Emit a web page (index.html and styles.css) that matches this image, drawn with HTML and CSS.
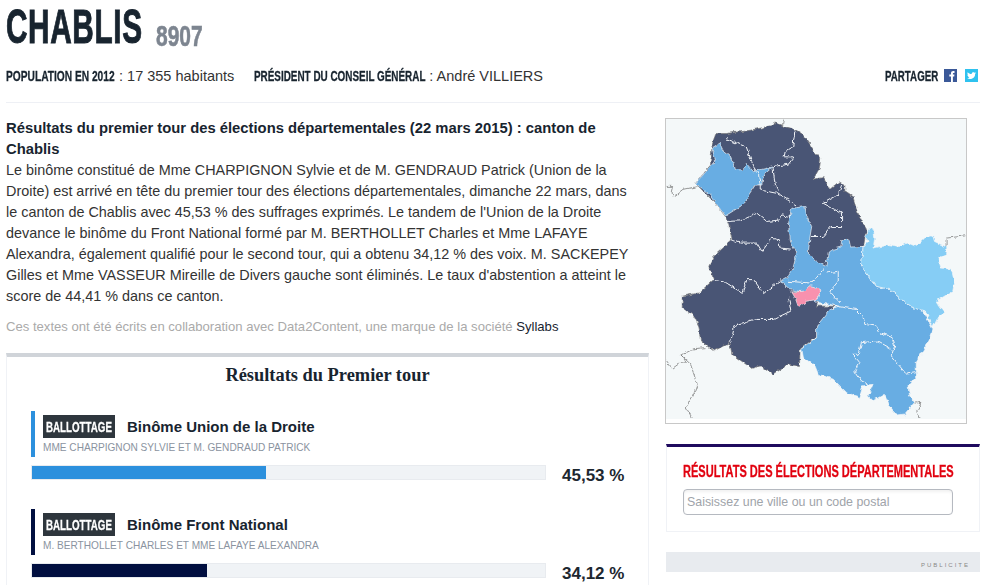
FILE: index.html
```html
<!DOCTYPE html>
<html lang="fr">
<head>
<meta charset="UTF-8">
<meta name="viewport" content="width=device-width, initial-scale=1.0">
<title>Chablis 8907</title>
<link rel="stylesheet" href="styles.css">
</head>
<body>
<div class="page">
  <h1 class="title"><span class="title-name">CHABLIS</span><span class="title-code">8907</span></h1>

  <div class="info">
    <p class="info-item"><strong class="label label-pop">POPULATION EN 2012</strong> : 17 355 habitants</p>
    <p class="info-item"><strong class="label label-pres">PRÉSIDENT DU CONSEIL GÉNÉRAL</strong> : André VILLIERS</p>
    <div class="share">
      <strong class="label label-share">PARTAGER</strong>
      <svg class="share-icon" viewBox="0 0 13 13"><rect width="13" height="13" fill="#3b5998"/><path d="M7 13V7.6H5.3V5.6H7V4.2C7 2.7 7.9 2 9.2 2H10.5V3.9H9.6C9 3.9 8.9 4.2 8.9 4.6V5.6H10.4L10.2 7.6H8.9V13Z" fill="#fff"/></svg>
      <svg class="share-icon" viewBox="0 0 13 13"><rect width="13" height="13" fill="#2fc2ef"/><path d="M11 4C10.7 4.2 10.3 4.3 9.9 4.3 10.3 4.1 10.6 3.7 10.8 3.2 10.4 3.4 10 3.6 9.5 3.7 8.6 2.7 6.7 3.3 6.7 4.7V5.1C5 5 3.600 4.300 2.700 3.200 2.200 4 2.400 5.100 3.200 5.700 2.900 5.700 2.600 5.600 2.300 5.400 2.300 6.300 2.900 7 3.800 7.200 3.500 7.300 3.200 7.300 2.900 7.200 3.100 7.900 3.800 8.400 4.600 8.500 3.800 9.100 2.900 9.400 2 9.300 5.600 11.300 10.200 9.200 10.100 4.900 10.500 4.700 10.800 4.400 11 4Z" fill="#fff"/></svg>
    </div>
  </div>

  <div class="main">
    <div class="content">
      <div class="article">
        <strong>Résultats du premier tour des élections départementales (22 mars 2015) : canton de Chablis</strong><br>
        Le binôme constitué de Mme CHARPIGNON Sylvie et de M. GENDRAUD Patrick (Union de la Droite) est arrivé en tête du premier tour des élections départementales, dimanche 22 mars, dans le canton de Chablis avec 45,53 % des suffrages exprimés. Le tandem de l'Union de la Droite devance le binôme du Front National formé par M. BERTHOLLET Charles et Mme LAFAYE Alexandra, également qualifié pour le second tour, qui a obtenu 34,12 % des voix. M. SACKEPEY Gilles et Mme VASSEUR Mireille de Divers gauche sont éliminés. Le taux d'abstention a atteint le score de 44,41 % dans ce canton.
      </div>
      <p class="credit">Ces textes ont été écrits en collaboration avec Data2Content, une marque de la société <span class="credit-link">Syllabs</span></p>

      <div class="results">
        <h2 class="results-title">Résultats du Premier tour</h2>

        <div class="candidate">
          <div class="candidate-head head-blue">
            <div class="candidate-line"><span class="badge"><span class="badge-text">BALLOTTAGE</span></span><span class="candidate-name">Binôme Union de la Droite</span></div>
            <div class="candidate-sub">MME CHARPIGNON SYLVIE ET M. GENDRAUD PATRICK</div>
          </div>
          <div class="score">
            <div class="bar"><div class="bar-fill fill-blue" style="width: 45.53%"></div></div>
            <span class="percent">45,53 %</span>
          </div>
        </div>

        <div class="candidate">
          <div class="candidate-head head-navy">
            <div class="candidate-line"><span class="badge"><span class="badge-text">BALLOTTAGE</span></span><span class="candidate-name">Binôme Front National</span></div>
            <div class="candidate-sub">M. BERTHOLLET CHARLES ET MME LAFAYE ALEXANDRA</div>
          </div>
          <div class="score">
            <div class="bar"><div class="bar-fill fill-navy" style="width: 34.12%"></div></div>
            <span class="percent">34,12 %</span>
          </div>
        </div>
      </div>
    </div>

    <aside class="side">
      <div class="map">
        <svg class="map-svg" viewBox="16 26 904 904">
          <defs>
            <filter id="rough" x="0" y="0" width="100%" height="100%">
              <feTurbulence type="fractalNoise" baseFrequency="0.07" numOctaves="2" seed="4"/>
              <feDisplacementMap in="SourceGraphic" scale="14" xChannelSelector="R" yChannelSelector="G"/>
            </filter>
          </defs>
          <rect x="16" y="26" width="904" height="904" fill="#f4f8f9"/>
          <g filter="url(#rough)">
            <!-- contours hors departement -->
            <g fill="none" stroke="#666" stroke-width="2">
              <path d="M370 28L367 48"/>
              <path d="M18 229H36L31 250L42 260L70 238L108 230"/>
              <path d="M860 412V385L918 378"/>
              <path d="M18 755L35 778L60 760L78 762L62 738L100 718L135 715"/>
              <path d="M62 738L90 765L110 825L98 860L76 895L95 927"/>
              <path d="M765 882L784 880L772 905L778 927"/>
            </g>
            <!-- cantons -->
            <path class="dark" d="M345 35L368 48L405 58L425 70L445 95L462 122L482 145L478 175L460 207L490 203L510 238L537 215L555 225L555 245L580 262L590 300L612 345L620 358L612 405L560 440L500 470L470 590L525 590L470 650L470 680L420 720L418 772L385 765L340 795L300 770L275 778L215 735L208 700L160 725L120 695L115 650L100 620L65 595L65 560L115 550L160 510L145 470L160 440L215 390L205 345L195 320L165 280L130 245L105 220L150 165L155 105L165 70L200 70L270 60L340 45Z"/>
            <path class="mid" d="M155 115L178 100L190 125L215 145L225 178L250 180L258 160L280 185L295 180L338 170L310 195L305 225L285 225L265 255L255 280L195 318L170 285L150 255L105 220L145 175L165 150Z"/>
            <path class="mid" d="M395 295L435 290L440 320L455 350L450 380L445 430L470 455L497 470L505 430L520 418L543 412L545 392L568 392L572 412L610 410L605 470L650 530L690 540L750 590L790 605L815 650L820 660L805 700L770 760L770 800L745 830L750 860L765 880L735 915L710 918L690 890L675 855L640 875L625 860L640 825L610 830L600 865L560 850L520 810L475 795L465 770L430 745L425 718L470 685L470 650L510 600L540 590L470 578L440 550L390 540L362 515L380 505L400 470L410 430L392 400L385 345Z"/>
            <path class="light" d="M628 355L642 360L645 385L640 415L690 405L720 410L745 400L770 410L800 380L820 378L825 395L862 412L862 432L835 445L845 475L875 478L885 520L880 545L830 575L855 610L835 625L820 655L800 610L790 603L750 590L690 540L650 530L605 470L610 410L625 395L615 380Z"/>
            <path class="pink" d="M395 547L430 545L450 528L465 532L483 543L470 570L440 575L415 592L405 565Z"/>
            <!-- limites internes -->
            <g fill="none" stroke="#f1f4f8" stroke-width="3">
              <path d="M197 85L232 100L258 110L280 170L295 195L300 225L300 240L350 250L408 285"/>
              <path d="M405 60L398 110L375 125L372 140L402 140L385 162L338 170L345 225L355 245"/>
              <path d="M195 335L240 333L290 310L320 335L360 330L365 315L392 320"/>
              <path d="M215 390L240 400L290 400L305 425L335 385L355 390L360 415L395 418"/>
              <path d="M455 380L490 380L515 350H545L545 310L490 280L535 255L545 225"/>
              <path d="M160 512L195 518L245 550L260 510L280 510L310 552L365 510"/>
              <path d="M385 565L392 605L360 620L340 630L290 630L222 650L210 700"/>
              <path d="M497 470L465 510L448 520L385 515"/>
              <path d="M500 490L535 485L535 515L510 545L540 580"/>
              <path d="M540 592L590 600L610 620L615 645L650 650L660 670L695 680L705 710L695 740L740 795L770 790"/>
              <path d="M695 720L650 695L605 700L595 735L578 735L600 760L585 785L605 815L625 825"/>
            </g>
          </g>
        </svg>
      </div>

      <div class="search">
        <h3 class="search-title">RÉSULTATS DES ÉLECTIONS DÉPARTEMENTALES</h3>
        <input class="search-input" type="text" placeholder="Saisissez une ville ou un code postal">
      </div>

      <div class="pub">PUBLICITE</div>
    </aside>
  </div>
</div>
</body>
</html>
```

FILE: styles.css
```css
html, body {
  margin: 0;
  padding: 0;
  background-color: #fff;
}

body {
  font-family: "Liberation Sans", Arial, sans-serif;
  font-size: 14px;
  color: #1d2730;
  overflow: hidden;
  height: 585px;
}

.page {
  width: 974px;
  margin-left: 6px;
}

.title {
  display: flex;
  margin: 0;
  height: 59px;
  font-size: 48px;
  line-height: 53px;
  font-weight: bold;
  color: #18242f;
}

.title-name {
  display: inline-block;
  width: 137px;
  white-space: nowrap;
  letter-spacing: 1px;
  -webkit-text-stroke: 1px #18242f;
  transform: scaleX(.62);
  transform-origin: 0 50%;
}

.title-code {
  display: inline-block;
  width: 47px;
  margin-left: 13px;
  font-size: 30px;
  line-height: 71px;
  color: #7d8590;
  white-space: nowrap;
  -webkit-text-stroke: .6px #7d8590;
  transform: scaleX(.7);
  transform-origin: 0 50%;
}

.info {
  display: flex;
  align-items: center;
  height: 33px;
  padding-bottom: 10px;
  border-bottom: 1px solid #eef0f5;
}

.info-item {
  margin: 0 20px 0 0;
  font-size: 14.5px;
  color: #333;
}

.label {
  display: inline-block;
  font-size: 15px;
  font-weight: bold;
  color: #18242f;
  white-space: nowrap;
  -webkit-text-stroke: .3px #18242f;
  transform: scaleX(.68);
  transform-origin: 0 50%;
}

.label-pop {
  width: 109px;
}

.label-pres {
  width: 171px;
  transform: scaleX(.66);
}

.label-share {
  width: 53px;
  transform: scaleX(.65);
}

.share {
  display: flex;
  align-items: center;
  margin-left: auto;
  margin-right: 2px;
}

.share-icon {
  width: 13px;
  height: 13px;
  margin-left: 8px;
}

.label-share + .share-icon {
  margin-left: 6px;
}

.main {
  display: flex;
  justify-content: space-between;
  margin-top: 15px;
}

.content {
  width: 643px;
}

.article {
  width: 632px;
  font-size: 14.4px;
  line-height: 21px;
  color: #333;
}

.article strong {
  font-size: 14.8px;
  color: #18242f;
}

.credit {
  margin: 9px 0 0;
  font-size: 13.1px;
  line-height: 21px;
  color: #aaa;
}

.credit-link {
  color: #18242f;
}

.results {
  margin-top: 16px;
  border-top: 4px solid #d0d4d9;
  border-left: 1px solid #f0f2f6;
  border-right: 1px solid #f0f2f6;
  padding: 0 24px;
}

.results-title {
  margin: 7px 0 25px;
  text-align: center;
  font-family: "Liberation Serif", serif;
  font-size: 18.4px;
  line-height: 22px;
  color: #18242f;
}

.candidate {
  margin-bottom: 22px;
}

.candidate-head {
  height: 42px;
  padding: 4px 0 0 8px;
  border-left: 4px solid #2c90dd;
}

.head-blue {
  border-left-color: #2c90dd;
}

.head-navy {
  border-left-color: #010f40;
}

.candidate-line {
  display: flex;
  align-items: center;
}

.badge {
  width: 72px;
  height: 23px;
  line-height: 23px;
  background-color: #2e363d;
  overflow: hidden;
}

.badge-text {
  display: block;
  margin-left: 3px;
  color: #fff;
  font-size: 15px;
  font-weight: bold;
  white-space: nowrap;
  -webkit-text-stroke: .3px #fff;
  transform: scaleX(.65);
  transform-origin: 0 50%;
}

.candidate-name {
  margin-left: 12px;
  font-size: 15px;
  font-weight: bold;
  color: #18242f;
}

.candidate-sub {
  margin-top: 3px;
  font-size: 10.1px;
  line-height: 14px;
  color: #8a93a0;
}

.score {
  display: flex;
  align-items: flex-start;
  margin-top: 8px;
}

.bar {
  flex: none;
  width: 513px;
  height: 13px;
  border: 1px solid #e8ebef;
  background-color: #f0f3f6;
}

.bar-fill {
  height: 100%;
}

.fill-blue {
  background-color: #2c90dd;
}

.fill-navy {
  background-color: #010f40;
}

.percent {
  margin-left: 16px;
  font-size: 17px;
  font-weight: bold;
  line-height: 22px;
  white-space: nowrap;
  color: #1d2730;
}

.side {
  width: 315px;
}

.map {
  width: 300px;
  height: 304px;
  border: 1px solid #c8c8c8;
}

.map-svg {
  display: block;
  width: 300px;
  height: 300px;
}

.dark {
  fill: #4a5574;
  stroke: #777;
  stroke-width: 2;
}

.mid {
  fill: #68ade3;
  stroke: #f1f4f8;
  stroke-width: 2;
}

.light {
  fill: #86cdf5;
  stroke: #f1f4f8;
  stroke-width: 2;
}

.pink {
  fill: #f891ae;
  stroke: #f1f4f8;
  stroke-width: 2;
}

.search {
  margin: 20px 0 0 1px;
  border-top: 3px solid #1f0a5e;
  border-left: 1px solid #f0f2f6;
  border-right: 1px solid #f0f2f6;
  border-bottom: 1px solid #f0f2f6;
  padding: 16px;
}

.search-title {
  margin: 0 0 8px;
  width: 271px;
  font-size: 16px;
  line-height: 18px;
  color: #e1000f;
  white-space: nowrap;
  -webkit-text-stroke: .3px #e1000f;
  transform: scaleX(.69);
  transform-origin: 0 50%;
}

.search-input {
  display: block;
  width: 270px;
  height: 26px;
  padding: 0 3px;
  box-sizing: border-box;
  border: 1px solid #b5b9c0;
  border-radius: 4px;
  box-shadow: inset 0 2px 3px rgba(0, 0, 0, .06);
  font-family: "Liberation Sans", sans-serif;
  font-size: 12.4px;
}

.search-input::placeholder {
  color: #a0a4aa;
}

.pub {
  margin: 20px 0 0 1px;
  height: 20px;
  padding-right: 10px;
  background-color: #e8ebef;
  text-align: right;
  font-size: 6px;
  line-height: 27px;
  letter-spacing: 2px;
  color: #888;
  overflow: hidden;
}
```
